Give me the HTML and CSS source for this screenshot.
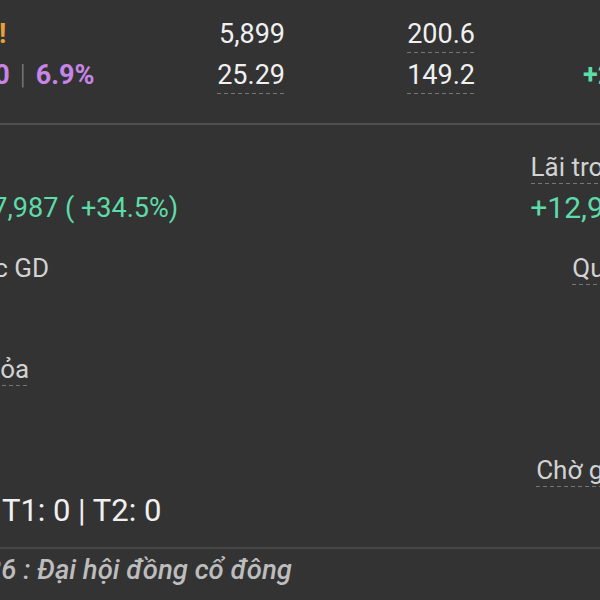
FILE: index.html
```html
<!DOCTYPE html>
<html lang="vi">
<head>
    <meta charset="UTF-8">
    <meta name="viewport" content="width=device-width, initial-scale=1.0">
    <title>Chi tiết mã</title>
    <link rel="stylesheet" href="styles.css">
</head>
<body>
    <div class="screen">
        <div class="quote">
            <div class="cell name"><span class="ticker">HPG</span><span class="warn">!</span></div>
            <div class="cell num">5,899</div>
            <div class="cell num dotted">200.6</div>
            <div class="cell"></div>

            <div class="cell name"><span class="ceil">+13,350</span><span class="sep">|</span><span class="ceil">6.9%</span></div>
            <div class="cell num dotted">25.29</div>
            <div class="cell num dotted">149.2</div>
            <div class="cell change up">+2.15%</div>
        </div>

        <div class="holding">
            <div class="item">
                <span class="label">Lãi/lỗ</span>
                <span class="value fit up">+14,567,987 ( +34.5%)</span>
            </div>
            <div class="item right">
                <span class="label dotted">Lãi trong ngày</span>
                <span class="value up">+12,987,654</span>
            </div>

            <div class="item">
                <span class="label">KL được GD</span>
                <span class="value">1,000</span>
            </div>
            <div class="item right">
                <span class="label dotted">Quyền chờ</span>
                <span class="value">0</span>
            </div>

            <div class="item">
                <span class="label dotted">Phong tỏa</span>
                <span class="value">0</span>
            </div>
            <div class="item right">
                <span class="label">Ký quỹ</span>
                <span class="value">0</span>
            </div>

            <div class="item">
                <span class="label">Chờ về</span>
                <span class="value pending">T0: 0 | T1: 0 | T2: 0</span>
            </div>
            <div class="item right">
                <span class="label dotted">Chờ giao dịch</span>
                <span class="value">0</span>
            </div>
        </div>

        <div class="events">
            <p class="event">04/2026 : Đại hội đồng cổ đông</p>
        </div>
    </div>
</body>
</html>
```

FILE: styles.css
```css
body {
    margin: 0;
    background-color: #333333;
    color: #f0f0f0;
    font-family: Roboto, "Noto Sans", sans-serif;
    overflow: hidden;
}

/* the phone screen is wider than the crop, it starts left of the window */
.screen {
    width: 783px;
    margin-left: -89px;
}

.dotted {
    background: linear-gradient(90deg, #767676 4px, transparent 4px) left bottom / 7px 1px repeat-x;
}

.up {
    color: #5ddba8;
}

/* price table */
.quote {
    display: grid;
    grid-template-columns: 200px 174px 190px 1fr;
    row-gap: 6px;
    padding: 18px 0 29px;
    border-bottom: 2px solid #4f4f4f;
}
.cell {
    font-size: 27px;
    line-height: 32px;
    padding-bottom: 3px;
    white-space: nowrap;
}
.num {
    justify-self: end;
}
.name {
    display: flex;
    align-items: baseline;
    font-weight: 700;
}
.ticker {
    color: #ffffff;
}
.warn {
    margin-left: 33px;
    color: #e9a13b;
}
.ceil {
    color: #c785e8;
}
.sep {
    margin: 0 10px;
    color: #7d7d7d;
    font-weight: 300;
}
.change {
    padding-left: 108px;
    font-weight: 700;
}

/* holding details */
.holding {
    display: grid;
    grid-template-columns: 1fr 1fr;
    row-gap: 29px;
    padding: 27px 0 20px;
    border-bottom: 2px solid #464646;
}
.item {
    display: flex;
    flex-direction: column;
    align-items: flex-start;
    gap: 8px;
    white-space: nowrap;
}
.item.right {
    align-items: flex-end;
}
.label {
    font-size: 26px;
    line-height: 30px;
    padding-bottom: 2px;
    color: #d2d2d2;
}
.value {
    font-size: 30px;
    line-height: 32px;
}
.value.fit {
    font-size: 27px;
}
.value.pending {
    font-size: 31px;
}

/* events */
.events {
    padding: 5px 0 0 4px;
}
.event {
    margin: 0;
    font-size: 27.5px;
    line-height: 32px;
    font-style: italic;
    font-weight: 500;
    color: #bdbdbd;
    white-space: nowrap;
}
```
